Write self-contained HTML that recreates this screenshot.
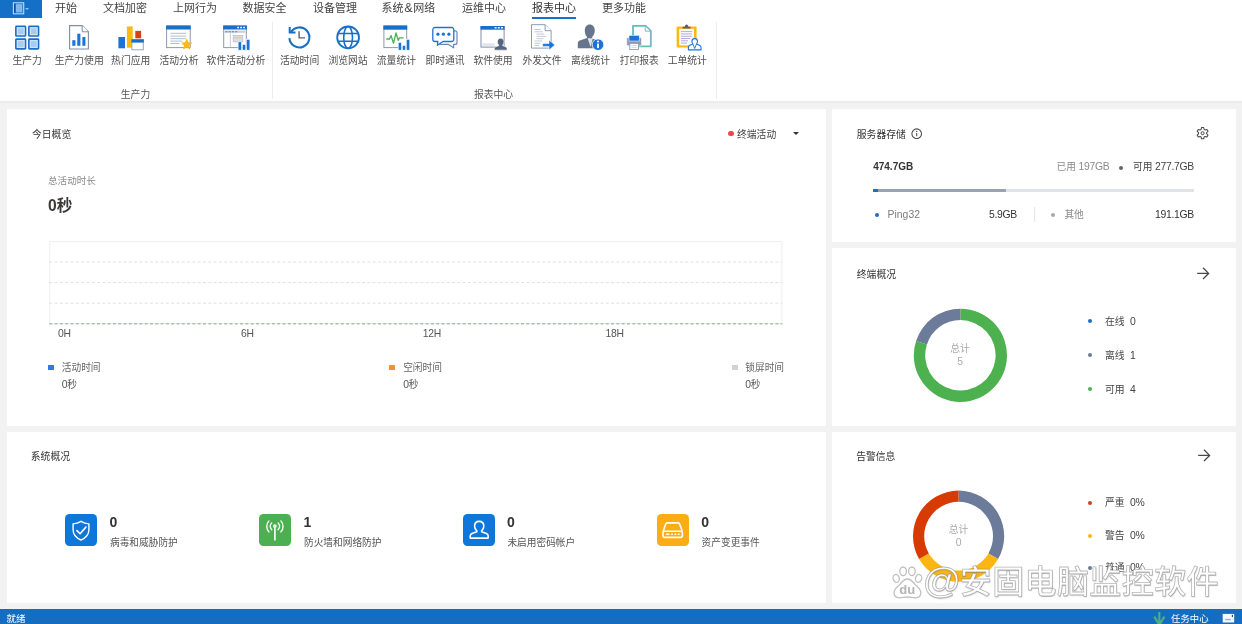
<!DOCTYPE html>
<html lang="zh-CN">
<head>
<meta charset="utf-8">
<title>报表中心</title>
<style>
*{box-sizing:border-box;margin:0;padding:0}
html,body{width:1242px;height:624px;overflow:hidden;background:#f2f2f2}
body{font-family:"Liberation Sans","Noto Sans CJK SC",sans-serif;color:#444;position:relative;font-size:9.8px;font-weight:400}
.a{position:absolute}
.t{position:absolute;white-space:nowrap;line-height:14px;height:14px}
.c{transform:translateX(-50%)}
#ribbon{left:0;top:0;width:1242px;height:103px;background:#fff;border-bottom:2.4px solid #ececec}
#appbtn{left:0;top:0;width:41.9px;height:18.1px;background:#1470c6}
.tab{font-size:11px;color:#444;top:1.2px}
.lbl{font-size:9.8px;color:#505050;top:53.5px}
.grp{font-size:9.8px;color:#555;top:88px}
.sep{top:22px;width:1px;height:77px;background:#ededed}
.panel{background:#fff}
.pt{font-size:9.8px;color:#333}
.ic{position:absolute}
.tile{top:514.3px;width:31.8px;height:31.7px;border-radius:4.5px}
.num{top:512.8px;font-size:14px;font-weight:bold;color:#333;line-height:18px;height:18px}
.sub{top:535.8px;font-size:9.7px;color:#555}
.dot{width:4px;height:4px;border-radius:50%}
.lg{font-size:9.8px;color:#444}
.n{font-size:10.4px;letter-spacing:-0.3px}
#status{left:0;top:608.6px;width:1242px;height:16px;background:#156dc2}
</style>
</head>
<body>
<div id="root" style="position:absolute;left:0;top:0;width:1242px;height:624px;will-change:transform">
<!-- RIBBON -->
<div id="ribbon" class="a"></div>
<div id="appbtn" class="a"></div>
<!--APPICON-->
<div class="t tab" style="left:55px">开始</div>
<div class="t tab" style="left:103px">文档加密</div>
<div class="t tab" style="left:173px">上网行为</div>
<div class="t tab" style="left:242.5px">数据安全</div>
<div class="t tab" style="left:313px">设备管理</div>
<div class="t tab" style="left:381.5px">系统<span style="font-size:12.6px;line-height:10px;padding:0 0.7px">&amp;</span>网络</div>
<div class="t tab" style="left:462px">运维中心</div>
<div class="t tab" style="left:532px;color:#333">报表中心</div>
<div class="t tab" style="left:602px">更多功能</div>
<div class="a" style="left:532px;top:16.8px;width:44px;height:2px;background:#1a6fc2"></div>

<div class="t lbl c" style="left:27.2px">生产力</div>
<div class="t lbl c" style="left:79.2px">生产力使用</div>
<div class="t lbl c" style="left:130.7px">热门应用</div>
<div class="t lbl c" style="left:179px">活动分析</div>
<div class="t lbl c" style="left:236px">软件活动分析</div>
<div class="t lbl c" style="left:299.6px">活动时间</div>
<div class="t lbl c" style="left:348px">浏览网站</div>
<div class="t lbl c" style="left:396.4px">流量统计</div>
<div class="t lbl c" style="left:445px">即时通讯</div>
<div class="t lbl c" style="left:493px">软件使用</div>
<div class="t lbl c" style="left:542px">外发文件</div>
<div class="t lbl c" style="left:590.5px">离线统计</div>
<div class="t lbl c" style="left:639.3px">打印报表</div>
<div class="t lbl c" style="left:687.3px">工单统计</div>
<div class="t grp c" style="left:135.5px">生产力</div>
<div class="t grp c" style="left:493.5px">报表中心</div>
<div class="a sep" style="left:271.5px"></div>
<div class="a sep" style="left:716px"></div>
<!--RIBBONICONS_START-->
<svg class="a" style="left:0;top:0" width="1242" height="101" viewBox="0 0 1242 101">
<!-- app button icon -->
<rect x="13.4" y="2.8" width="10.3" height="11" fill="none" stroke="#b4dbff" stroke-width="1.1"/>
<rect x="15.9" y="4.2" width="6.4" height="8.2" fill="#9fc6ee" opacity="0.85"/>
<path d="M14.7 3.6v9.4" stroke="#0c4f98" stroke-width="1"/>
<path d="M17 6.5h4M17 8.4h4M17 10.3h4" stroke="#7fb0e4" stroke-width="0.8"/>
<path d="M25 7.9h4l-2 2.1z" fill="#8fc4f6"/>
<!-- 1 grid -->
<g fill="#a7cbf1" stroke="#186fc8" stroke-width="1.7">
<rect x="15.9" y="26.4" width="9.6" height="9.6" rx="0.6"/>
<rect x="28.9" y="26.4" width="9.6" height="9.6" rx="0.6"/>
<rect x="15.9" y="39.2" width="9.6" height="9.6" rx="0.6"/>
<rect x="28.9" y="39.2" width="9.6" height="9.6" rx="0.6"/>
</g>
<g fill="none" stroke="#d3e6fa" stroke-width="1">
<rect x="17.3" y="27.8" width="6.8" height="6.8"/>
<rect x="30.3" y="27.8" width="6.8" height="6.8"/>
<rect x="17.3" y="40.6" width="6.8" height="6.8"/>
<rect x="30.3" y="40.6" width="6.8" height="6.8"/>
</g>
<!-- 2 doc bars -->
<path d="M69.6 25.6h12.6l6.2 6.2v17.2h-18.8z" fill="#fff" stroke="#7f8fa8" stroke-width="1.1"/>
<path d="M82.2 25.6v6.2h6.2" fill="#fff" stroke="#7f8fa8" stroke-width="1"/>
<g fill="#1b73d6">
<rect x="72.3" y="40.2" width="3.1" height="5.6"/>
<rect x="77.3" y="33.7" width="3.1" height="12.1"/>
<rect x="82.4" y="37" width="3" height="8.8"/>
</g>
<!-- 3 hot apps -->
<rect x="118.4" y="37" width="6.6" height="11.3" fill="#1b73d6"/>
<rect x="126.9" y="26.4" width="5.8" height="21.3" fill="#fdb813"/>
<rect x="135.3" y="30.9" width="5.8" height="7.4" fill="#d8401c"/>
<rect x="131.9" y="39.8" width="11.4" height="10" fill="#fff" stroke="#9aa7ba" stroke-width="1"/>
<rect x="131.4" y="39.3" width="12.4" height="3.3" fill="#186fc8"/>
<!-- 4 activity analysis -->
<rect x="166.6" y="26" width="23.6" height="21.6" fill="#fff" stroke="#8a99b2" stroke-width="1"/>
<rect x="166.1" y="25.5" width="24.6" height="4" fill="#186fc8"/>
<g stroke="#a9b6cc" stroke-width="0.9">
<path d="M170.4 33.3h15.8M170.4 36.1h15.8M170.4 38.7h15.6M170.4 41.1h12M170.4 43.5h9"/>
</g>
<path d="M186.7 38.6l1.7 3.7 4 .45-3 2.75.85 4-3.55-2.05-3.55 2.05.85-4-3-2.75 4-.45z" fill="#fdb813"/>
<!-- 5 software activity -->
<rect x="223.7" y="26" width="22.6" height="21.6" fill="#fff" stroke="#8a99b2" stroke-width="1"/>
<rect x="223.2" y="25.5" width="23.6" height="4" fill="#186fc8"/>
<g fill="#fff"><rect x="237.2" y="26.8" width="1.7" height="1.5"/><rect x="240.2" y="26.8" width="1.7" height="1.5"/><rect x="243.2" y="26.8" width="1.7" height="1.5"/></g>
<rect x="224.6" y="30.6" width="20.8" height="2.2" fill="#c9cfdb"/>
<g fill="#7e8aa0"><rect x="225.3" y="31.1" width="2" height="1.2"/><rect x="228.6" y="31.1" width="2" height="1.2"/><rect x="231.9" y="31.1" width="2" height="1.2"/><rect x="235.2" y="31.1" width="2" height="1.2"/></g>
<path d="M230.4 33v14" stroke="#c9cfdb" stroke-width="1"/>
<rect x="233.2" y="35.4" width="9.6" height="6.5" fill="#d9dde6" stroke="#b9c1cf" stroke-width="0.8"/>
<rect x="234.6" y="37" width="6.8" height="1.5" fill="#e9c9a6"/>
<g fill="#1b73d6" stroke="#fff" stroke-width="0.6">
<rect x="238.1" y="41.8" width="3.4" height="8.4"/>
<rect x="242.3" y="44.4" width="3.4" height="5.8"/>
<rect x="246.5" y="39.3" width="3.4" height="10.9"/>
</g>
<!-- 6 history clock -->
<path d="M290.92 32.10A10 10 0 1 1 289.42 38.10" fill="none" stroke="#186fc8" stroke-width="2.1"/>
<path d="M289.7 26.9v5.6h5.8" fill="none" stroke="#186fc8" stroke-width="2"/>
<path d="M299.1 31.2v6.7h5.9" fill="none" stroke="#5c6470" stroke-width="1.4"/>
<!-- 7 globe -->
<g fill="none" stroke="#186fc8" stroke-width="1.8">
<circle cx="348.1" cy="37.4" r="10.9"/>
<ellipse cx="348.1" cy="37.4" rx="4.4" ry="10.9" stroke-width="1.6"/>
<path d="M338.2 33.4h19.8M338.2 41.2h19.8" stroke-width="1.5"/>
</g>
<!-- 8 traffic -->
<rect x="383.9" y="26" width="22.8" height="21.6" fill="#fff" stroke="#8a99b2" stroke-width="1"/>
<rect x="383.4" y="25.5" width="23.8" height="4.2" fill="#186fc8"/>
<path d="M386.3 39h3.2l1.6-3.4 2.4 7.6 2.5-10.2 2.2 7.4 1.3-2.6h4" fill="none" stroke="#4cae50" stroke-width="1.3" stroke-linejoin="round"/>
<g fill="#1b73d6" stroke="#fff" stroke-width="0.6">
<rect x="398.2" y="42.4" width="3.3" height="7.8"/>
<rect x="402.3" y="45.4" width="3.3" height="4.8"/>
<rect x="406.4" y="39.3" width="3.4" height="10.9"/>
</g>
<!-- 9 chat -->
<path d="M440 30.8h15a2 2 0 0 1 2 2v9.600000000000001a2 2 0 0 1-2 2h-1.500000000000001l.2 3.400000000000001-5.2-3.400000000000001h-8.5z" fill="#fff" stroke="#7286ab" stroke-width="1.2" stroke-linejoin="round"/>
<path d="M435 27.500000000000004h16.6a2.2 2.2 0 0 1 2.2 2.2v9.600000000000001a2.2 2.2 0 0 1-2.2 2.2h-8.6l-5.600000000000001 3.8.4-3.8h-2.800000000000001a2.2 2.2 0 0 1-2.2-2.2v-9.600000000000001a2.2 2.2 0 0 1 2.2-2.2z" fill="#fff" stroke="#1b73d6" stroke-width="1.3" stroke-linejoin="round"/>
<g fill="#1b73d6"><circle cx="437.9" cy="34.2" r="1.6"/><circle cx="443.4" cy="34.2" r="1.6"/><circle cx="448.9" cy="34.2" r="1.6"/></g>
<!-- 10 software use -->
<rect x="481" y="26.5" width="23.1" height="20.6" fill="#fff" stroke="#7f8fa8" stroke-width="1"/>
<rect x="480.5" y="26" width="24.1" height="3.7" fill="#186fc8"/>
<g fill="#fff"><rect x="494.6" y="27.1" width="2" height="1.4"/><rect x="497.8" y="27.1" width="2" height="1.4"/><rect x="501" y="27.1" width="2" height="1.4"/></g>
<rect x="482.4" y="43.4" width="12" height="2.4" fill="#dfe3ec"/>
<path d="M500.7 38.2c2.100000000000001 0 3.300000000000001 1.6 3.300000000000001 3.600000000000001 0 1.5-.7000000000000001 2.600000000000001-1.3 3.2v.7000000000000001l3.300000000000001 1.3c.7000000000000001.3 1 .8 1 1.600000000000001v1.600000000000001h-12.600000000000001v-1.600000000000001c0-.8.3-1.3 1-1.600000000000001l3.300000000000001-1.3v-.7000000000000001c-.6000000000000001-.6000000000000001-1.3-1.7000000000000002-1.3-3.2 0-2 1.2000000000000002-3.600000000000001 3.300000000000001-3.600000000000001z" fill="#56657f" stroke="#fff" stroke-width="0.6"/>
<!-- 11 send file -->
<path d="M531.5 24.7h13.6l6 6v17.4h-19.6z" fill="#fff" stroke="#8e9bb3" stroke-width="1"/>
<path d="M545.1 24.7v6h6" fill="#fff" stroke="#8e9bb3" stroke-width="1"/>
<g stroke="#c3c9d6" stroke-width="1"><path d="M534.4 29.500000000000004h6.4M534.4 31.8h8.4M536.4 34.1h8M536.4 36.4h9.6M536.4 38.7h7M534.4 41h8M534.4 43.3h6M534.4 45.6h5"/></g>
<path d="M542.6 43.6h6.4v-3.6l5.9 5-5.9 5v-3.6h-6.4z" fill="#1b73d6" stroke="#fff" stroke-width="0.6"/>
<!-- 12 offline stats -->
<path d="M589.8 24.4c3 0 5 2.5 5 6.2 0 2.8-1.200000000000001 5.2-2.6 6.4v1.4l5.800000000000001 2.2c1.4.6 2 1.6 2 3v4.6h-22.2v-4.6c0-1.4.6-2.4 2-3l7.2-2.600000000000001v-1c-1.4-1.2-2.200000000000001-3.6-2.200000000000001-6.4 0-3.7 2-6.2 5-6.2z" fill="#66748c"/>
<path d="M587.6 38.2l3 8.8 2.2-8.8z" fill="#fff" opacity="0.8"/>
<circle cx="598" cy="44.7" r="5.8" fill="#1b73d6" stroke="#fff" stroke-width="0.8"/>
<rect x="597.05" y="43.6" width="1.9" height="4.5" fill="#fff"/><circle cx="598" cy="41.5" r="1.1" fill="#fff"/>
<!-- 13 print -->
<path d="M633 25.8h12.600000000000001l5.2 5.2v15.4h-17.8z" fill="#fff" stroke="#5fbfba" stroke-width="1.8" stroke-linejoin="round"/>
<path d="M645.2 26.2v5h5" fill="#fff" stroke="#9aa7ba" stroke-width="0.9"/>
<path d="M650.9 31.5v15" stroke="#b8a9d6" stroke-width="0.8"/>
<rect x="626.7" y="37.6" width="14.8" height="8.2" rx="1.2" fill="#8e9bb3" stroke="#fff" stroke-width="0.6"/>
<rect x="629" y="35.4" width="10.2" height="5.6" fill="#1b73d6" stroke="#fff" stroke-width="0.5"/>
<rect x="629.8" y="43.4" width="8.6" height="6.2" fill="#fff" stroke="#8e9bb3" stroke-width="0.9"/>
<path d="M631.4 45.6h5.4M631.4 47.4h5.4" stroke="#c3c9d6" stroke-width="0.7"/>
<!-- 14 work order -->
<rect x="676.6" y="26.4" width="20" height="21.2" rx="1" fill="#fdb813"/>
<rect x="679.2" y="28.8" width="14.8" height="16.6" fill="#fff"/>
<path d="M682.6 28.4v-1.6h2.2c.2-1.6 1-2.400000000000002 1.8-2.400000000000002s1.6.8 1.8 2.400000000000002h2.2v1.6z" fill="#59616e"/>
<g stroke="#a9a0d8" stroke-width="0.9"><path d="M681 31.6h11.2M681 33.9h11.2M681 36.2h11.2M681 38.5h9M681 40.8h7M681 43.1h6"/></g>
<path d="M694.7 38.6c1.8 0 2.8 1.3 2.8 2.9 0 1.2-.6 2.1-1.1 2.6l3.100000000000001 1.1c1 .4 1.5 1.1 1.5 2.1v2.6h-12.6v-2.6c0-1 .5-1.7 1.5-2.1l3.100000000000001-1.1c-.5-.5-1.1-1.4-1.1-2.600000000000001 0-1.6 1-2.900000000000002 2.8-2.900000000000002z" fill="#fff" stroke="#1b73d6" stroke-width="1.1" stroke-linejoin="round"/>
<path d="M693.1 44.4l1.6 4.2 1.6-4.2" fill="none" stroke="#1b73d6" stroke-width="0.9"/>
</svg>
<!--RIBBONICONS_END-->

<!-- PANELS -->
<div class="a panel" style="left:6.5px;top:108.5px;width:819.3px;height:317px"></div>
<div class="a panel" style="left:6.5px;top:431.7px;width:819.3px;height:171.7px"></div>
<div class="a panel" style="left:832.2px;top:108.5px;width:403.5px;height:133.4px"></div>
<div class="a panel" style="left:832.2px;top:247.9px;width:403.5px;height:177.8px"></div>
<div class="a panel" style="left:832.2px;top:431.7px;width:403.5px;height:171.7px"></div>

<!--PANEL1-->
<div class="t pt" style="left:32px;top:127.5px">今日概览</div>
<div class="a" style="left:728px;top:130.7px;width:5.8px;height:5.8px;border-radius:50%;background:#e84a4c"></div>
<div class="t pt" style="left:737px;top:127.6px;color:#444">终端活动</div>
<div class="a" style="left:793px;top:131.8px;width:0;height:0;border-left:3px solid transparent;border-right:3px solid transparent;border-top:3.6px solid #333"></div>
<div class="t" style="left:48px;top:174px;color:#8a8a8a;font-size:9.6px">总活动时长</div>
<div class="t" style="left:48px;top:196px;color:#3b3a39;font-size:15.6px;font-weight:bold;line-height:20px;height:20px">0秒</div>
<svg class="a" style="left:40px;top:236px" width="750" height="96" viewBox="40 236 750 96">
<rect x="49.8" y="241.6" width="732" height="82" fill="none" stroke="#efefef" stroke-width="1"/>
<g stroke="#e1e1e1" stroke-width="1" stroke-dasharray="3 2.3"><path d="M49.3 262h733M49.3 282.6h733M49.3 303.2h733"/></g>
<path d="M49.3 323.6h733" stroke="#8fc98f" stroke-width="1" stroke-dasharray="3 2.3"/>
<path d="M49.3 324.2h733" stroke="#bbb" stroke-width="0.6" stroke-dasharray="3 2.3"/>
</svg>
<div class="t" style="left:58px;top:327px;color:#555;font-size:9.8px"><span class="n">0H</span></div>
<div class="t" style="left:241px;top:327px;color:#555;font-size:9.8px"><span class="n">6H</span></div>
<div class="t" style="left:422.7px;top:327px;color:#555;font-size:9.8px"><span class="n">12H</span></div>
<div class="t" style="left:605.5px;top:327px;color:#555;font-size:9.8px"><span class="n">18H</span></div>
<div class="a" style="left:48px;top:364.7px;width:6px;height:5.6px;background:#2b7de1"></div>
<div class="t" style="left:61.8px;top:360.8px;color:#666;font-size:9.7px">活动时间</div>
<div class="t" style="left:61.8px;top:377.7px;color:#555;font-size:9.7px"><span class="n">0</span>秒</div>
<div class="a" style="left:389px;top:364.7px;width:6px;height:5.6px;background:#e8963a"></div>
<div class="t" style="left:403.2px;top:360.8px;color:#666;font-size:9.7px">空闲时间</div>
<div class="t" style="left:403.2px;top:377.7px;color:#555;font-size:9.7px"><span class="n">0</span>秒</div>
<div class="a" style="left:731.5px;top:364.7px;width:6px;height:5.6px;background:#d2d2d2"></div>
<div class="t" style="left:745.3px;top:360.8px;color:#666;font-size:9.7px">锁屏时间</div>
<div class="t" style="left:745.3px;top:377.7px;color:#555;font-size:9.7px"><span class="n">0</span>秒</div>

<!--PANEL2-->
<div class="t pt" style="left:30.8px;top:450.2px">系统概况</div>
<div class="a tile" style="left:65.2px;background:#1077da"></div>
<div class="a tile" style="left:259px;background:#4caf50"></div>
<div class="a tile" style="left:463px;background:#1077da"></div>
<div class="a tile" style="left:656.8px;background:#fbad14"></div>
<div class="t num" style="left:109.6px">0</div>
<div class="t sub" style="left:110px">病毒和威胁防护</div>
<div class="t num" style="left:303.6px">1</div>
<div class="t sub" style="left:304px">防火墙和网络防护</div>
<div class="t num" style="left:507px">0</div>
<div class="t sub" style="left:507.4px">未启用密码帐户</div>
<div class="t num" style="left:701.2px">0</div>
<div class="t sub" style="left:701.6px">资产变更事件</div>
<svg class="a" style="left:60px;top:510px" width="640" height="42" viewBox="60 510 640 42" fill="none" stroke="#fff" stroke-width="1.5" stroke-linecap="round" stroke-linejoin="round">
<path d="M81 521.3c-2.5 1.6-5.1 2.4-7.9 2.6v5.9c0 5.1 3.4 8.3 7.9 10.2 4.5-1.9 7.9-5.1 7.9-10.2v-5.9c-2.8-.2-5.4-1-7.9-2.6z" stroke-width="1.4"/>
<path d="M76.9 530.6l3.2 3.1 5.9-6.7" stroke-width="1.6"/>
<path d="M274.9 527.4v12.6" stroke-width="1.6"/>
<circle cx="274.9" cy="526" r="1.2" stroke-width="1.3"/>
<path d="M271.7 522.9a4.6 4.6 0 0 0 0 6.8M278.1 522.9a4.6 4.6 0 0 1 0 6.8M268.9 520.9a8.2 8.2 0 0 0 0 11M280.9 520.9a8.2 8.2 0 0 1 0 11" stroke-width="1.4"/>
<path d="M479.2 521.4c2.900000000000001 0 4.600000000000001 2.1 4.600000000000001 4.800000000000001 0 2-1 3.6-2.2 4.600000000000001v1l4.800000000000001 1.8c1.2.5 1.8 1.3 1.8 2.6v1.9h-18v-1.9c0-1.3.6-2.1 1.8-2.6l4.800000000000001-1.8v-1c-1.2-1-2.2-2.600000000000001-2.2-4.600000000000001 0-2.7 1.700000000000001-4.800000000000001 4.600000000000001-4.800000000000001z" stroke-width="1.6"/>
<path d="M663.2 531.2l2.5-7.100000000000001c.3-.8.9-1.2 1.700000000000001-1.2h10.600000000000001c.8 0 1.4.4 1.700000000000001 1.200000000000001l2.5 7.100000000000001" stroke-width="1.6"/>
<rect x="663" y="531.2" width="19.4" height="6.2" rx="1.8" stroke-width="1.6"/>
<path d="M666.4 534.3h2.6M671.6 534.3h.8M675 534.3h.8M678.3 534.3h.8" stroke-width="1.4"/>
</svg>


<!--PANEL3-->
<div class="t pt" style="left:856.8px;top:128.2px">服务器存储</div>
<svg class="a" style="left:910px;top:127px" width="14" height="14" viewBox="0 0 14 14"><circle cx="6.7" cy="6.7" r="4.8" fill="none" stroke="#484848" stroke-width="1.05"/><rect x="6.2" y="5.9" width="1" height="3.3" fill="#484848"/><circle cx="6.7" cy="4.4" r="0.65" fill="#484848"/></svg>
<svg class="a" style="left:1192px;top:123px" width="22" height="22" viewBox="1192 123 22 22"><path d="M1204.07 129.37L1203.70 127.56L1201.50 127.56L1201.13 129.37L1200.02 130.01L1198.26 129.43L1197.16 131.33L1198.55 132.56L1198.55 133.84L1197.16 135.07L1198.26 136.97L1200.02 136.39L1201.13 137.03L1201.50 138.84L1203.70 138.84L1204.07 137.03L1205.18 136.39L1206.94 136.97L1208.04 135.07L1206.65 133.84L1206.65 132.56L1208.04 131.33L1206.94 129.43L1205.18 130.01Z" fill="none" stroke="#484848" stroke-width="1.05" stroke-linejoin="round"/><circle cx="1202.6" cy="133.2" r="1.55" fill="none" stroke="#484848" stroke-width="1"/></svg>
<div class="t" style="left:873.2px;top:159.7px;color:#333;font-size:10px;font-weight:bold">474.7GB</div>
<div class="t" style="left:1056.5px;top:160.2px;color:#8a8a8a;font-size:9.7px">已用 <span class="n">197GB</span></div>
<div class="a" style="left:1119px;top:165.5px;width:4.2px;height:4.2px;border-radius:50%;background:#666"></div>
<div class="t" style="right:48px;top:160.2px;color:#444;font-size:9.7px">可用 <span class="n">277.7GB</span></div>
<div class="a" style="left:873.3px;top:188.6px;width:320.3px;height:3.8px;background:#e1e3e8"></div>
<div class="a" style="left:873.3px;top:188.6px;width:133.2px;height:3.8px;background:#98a3b4"></div>
<div class="a" style="left:873.3px;top:188.6px;width:4.6px;height:3.8px;background:#1a6fc8"></div>
<div class="a" style="left:874.8px;top:213px;width:4px;height:4px;border-radius:50%;background:#1a6fc8"></div>
<div class="t" style="left:887.6px;top:207.5px;color:#7c7c7c;font-size:9.8px"><span class="n" style="letter-spacing:0">Ping32</span></div>
<div class="t" style="right:225px;top:207.5px;color:#333;font-size:9.8px"><span class="n">5.9GB</span></div>
<div class="a" style="left:1033.6px;top:207px;width:1px;height:15px;background:#e6e6e6"></div>
<div class="a" style="left:1051px;top:213px;width:4px;height:4px;border-radius:50%;background:#aaa"></div>
<div class="t" style="left:1064.4px;top:207.5px;color:#888;font-size:9.7px">其他</div>
<div class="t" style="right:48px;top:207.5px;color:#333;font-size:9.8px"><span class="n">191.1GB</span></div>

<!--PANEL4-->
<div class="t pt" style="left:856.8px;top:268.1px">终端概况</div>
<svg class="a" style="left:1195px;top:266px" width="16" height="16" viewBox="0 0 16 16"><path d="M2.2 7.4h11.2M8 1.8l5.6 5.6-5.6 5.6" fill="none" stroke="#484848" stroke-width="1.3"/></svg>
<svg class="a" style="left:900px;top:300px" width="120" height="110" viewBox="900 300 120 110">
<path d="M960.40 308.70A46.6 46.6 0 1 1 916.08 340.90L926.92 344.42A35.2 35.2 0 1 0 960.40 320.10Z" fill="#4db14f"/>
<path d="M916.08 340.90A46.6 46.6 0 0 1 960.40 308.70L960.40 320.10A35.2 35.2 0 0 0 926.92 344.42Z" fill="#6b7b99"/>
</svg>
<div class="t c" style="left:960px;top:342px;color:#aaa;font-size:9.8px">总计</div>
<div class="t c" style="left:960px;top:355.4px;color:#aaa;font-size:9.8px"><span class="n">5</span></div>
<div class="a dot" style="left:1088.3px;top:319.4px;background:#1a6fc8"></div>
<div class="a dot" style="left:1088.3px;top:353.2px;background:#6b7b99"></div>
<div class="a dot" style="left:1088.3px;top:386.8px;background:#4db14f"></div>
<div class="t lg" style="left:1105px;top:315.4px">在线&nbsp; <span class="n">0</span></div>
<div class="t lg" style="left:1105px;top:349.1px">离线&nbsp; <span class="n">1</span></div>
<div class="t lg" style="left:1105px;top:382.5px">可用&nbsp; <span class="n">4</span></div>

<!--PANEL5-->
<div class="t pt" style="left:856.2px;top:450.1px">告警信息</div>
<svg class="a" style="left:1196px;top:448.3px" width="16" height="16" viewBox="0 0 16 16"><path d="M2.2 7.4h11.2M8 1.8l5.6 5.6-5.6 5.6" fill="none" stroke="#484848" stroke-width="1.3"/></svg>
<svg class="a" style="left:900px;top:480px" width="120" height="110" viewBox="900 480 120 110">
<path d="M958.60 490.60A45.6 45.6 0 0 1 998.09 559.00L988.39 553.40A34.4 34.4 0 0 0 958.60 501.80Z" fill="#6b7b99"/>
<path d="M998.09 559.00A45.6 45.6 0 0 1 919.11 559.00L928.81 553.40A34.4 34.4 0 0 0 988.39 553.40Z" fill="#fbb613"/>
<path d="M919.11 559.00A45.6 45.6 0 0 1 958.60 490.60L958.60 501.80A34.4 34.4 0 0 0 928.81 553.40Z" fill="#d83b01"/>
</svg>
<div class="t c" style="left:958.6px;top:522.5px;color:#aaa;font-size:9.8px">总计</div>
<div class="t c" style="left:958.6px;top:535.9px;color:#aaa;font-size:9.8px"><span class="n">0</span></div>
<div class="a dot" style="left:1088.3px;top:500.5px;background:#c8461a"></div>
<div class="a dot" style="left:1088.3px;top:533.5px;background:#fbb613"></div>
<div class="a dot" style="left:1088.3px;top:566.4px;background:#6b7b99"></div>
<div class="t lg" style="left:1105px;top:495.5px">严重&nbsp; <span class="n">0%</span></div>
<div class="t lg" style="left:1105px;top:528.5px">警告&nbsp; <span class="n">0%</span></div>
<div class="t lg" style="left:1105px;top:561.4px">普通&nbsp; <span class="n">0%</span></div>


<!-- STATUS -->
<div id="status" class="a"></div>
<div class="t" style="left:6.6px;top:612.2px;color:#fff;font-size:9.5px">就绪</div>
<div class="t" style="left:1171px;top:612.2px;color:#fff;font-size:9.4px">任务中心</div>
<svg class="a" style="left:1150px;top:609px" width="92" height="15" viewBox="1150 609 92 15">
<path d="M1159.3 611.9v13M1154.3 616.6l5 8.4 5-8.4" fill="none" stroke="#4fb07c" stroke-width="2.1"/>
<rect x="1222.7" y="613.9" width="11.5" height="8.6" fill="#f6f9fd"/>
<rect x="1225.2" y="618.8" width="5.6" height="1.5" fill="#9fb3c8"/>
<rect x="1231.8" y="614.8" width="1.2" height="2.2" fill="#1a4f8a"/>
</svg>

<div class="t" id="wm" style="left:922.6px;top:559.2px;font-weight:500;font-size:32px;line-height:44px;height:44px;color:#fff;-webkit-text-stroke:0.8px rgba(125,125,125,0.55);text-shadow:0.5px 0.8px 1.2px rgba(120,120,120,0.42);letter-spacing:0.4px;font-family:'Liberation Sans','Noto Sans CJK SC',sans-serif"><span style="font-size:35px;line-height:44px;display:inline-block;transform:scaleX(1.09);margin:0 -0.6px 0 1.8px">@</span>安固电脑监控软件</div>
<svg class="a" style="left:886px;top:560px" width="42" height="42" viewBox="886 560 42 42">
<g fill="#fff" stroke="rgba(140,140,140,0.55)" stroke-width="1.3">
<ellipse cx="903.1" cy="571.3" rx="3.3" ry="4.3"/>
<ellipse cx="911.9" cy="571.3" rx="3.3" ry="4.3"/>
<ellipse cx="896.2" cy="578.4" rx="3.1" ry="4" transform="rotate(-15 896.2 578.4)"/>
<ellipse cx="918.6" cy="578.4" rx="3.1" ry="4" transform="rotate(15 918.6 578.4)"/>
<path d="M907.4 579c3.200000000000001 0 4.800000000000001 2.2 7 4.800000000000001 2.4 2.800000000000001 6.4 4.800000000000001 6.4 8.8 0 3.2-2.2 5.2-5.4 5.2-2.800000000000001 0-5-.8-8-.8s-5.2.8-8 .8c-3.200000000000001 0-5.4-2-5.4-5.2 0-4 4-6 6.4-8.8 2.2-2.6 3.800000000000001-4.800000000000001 7-4.800000000000001z"/>
</g>
<text x="907.3" y="593.6" font-family="'Liberation Sans',sans-serif" font-weight="bold" font-size="13" text-anchor="middle" fill="#b4b4b4">du</text>
</svg>

</div>
</body>
</html>
